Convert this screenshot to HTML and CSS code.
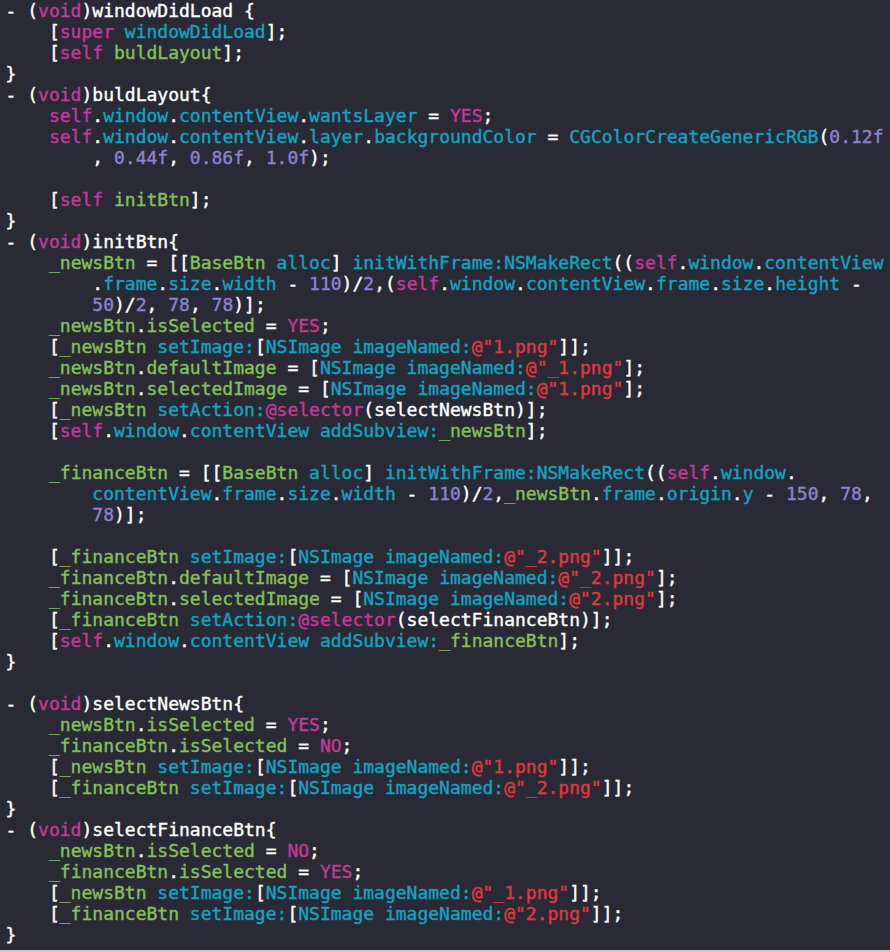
FILE: index.html
```html
<!DOCTYPE html>
<html>
<head>
<meta charset="utf-8">
<link rel="stylesheet" href="styles.css">
</head>
<body>
<div class="editor"><pre class="code">- (<span class="k">void</span>)windowDidLoad {
    [<span class="k">super</span> <span class="c">windowDidLoad</span>];
    [<span class="k">self</span> <span class="g">buldLayout</span>];
}
- (<span class="k">void</span>)buldLayout{
    <span class="k">self</span>.<span class="c">window</span>.<span class="c">contentView</span>.<span class="c">wantsLayer</span> = <span class="k">YES</span>;
    <span class="k">self</span>.<span class="c">window</span>.<span class="c">contentView</span>.<span class="c">layer</span>.<span class="c">backgroundColor</span> = <span class="c">CGColorCreateGenericRGB</span>(<span class="n">0.12f</span>
        , <span class="n">0.44f</span>, <span class="n">0.86f</span>, <span class="n">1.0f</span>);

    [<span class="k">self</span> <span class="g">initBtn</span>];
}
- (<span class="k">void</span>)initBtn{
    <span class="g">_newsBtn</span> = [[<span class="g">BaseBtn</span> <span class="c">alloc</span>] <span class="c">initWithFrame:</span><span class="c">NSMakeRect</span>((<span class="k">self</span>.<span class="c">window</span>.<span class="c">contentView</span>
        .<span class="c">frame</span>.<span class="c">size</span>.<span class="c">width</span> - <span class="n">110</span>)/<span class="n">2</span>,(<span class="k">self</span>.<span class="c">window</span>.<span class="c">contentView</span>.<span class="c">frame</span>.<span class="c">size</span>.<span class="c">height</span> -
        <span class="n">50</span>)/<span class="n">2</span>, <span class="n">78</span>, <span class="n">78</span>)];
    <span class="g">_newsBtn</span>.<span class="g">isSelected</span> = <span class="k">YES</span>;
    [<span class="g">_newsBtn</span> <span class="c">setImage:</span>[<span class="c">NSImage</span> <span class="c">imageNamed:</span><span class="s">@"1.png"</span>]];
    <span class="g">_newsBtn</span>.<span class="g">defaultImage</span> = [<span class="c">NSImage</span> <span class="c">imageNamed:</span><span class="s">@"_1.png"</span>];
    <span class="g">_newsBtn</span>.<span class="g">selectedImage</span> = [<span class="c">NSImage</span> <span class="c">imageNamed:</span><span class="s">@"1.png"</span>];
    [<span class="g">_newsBtn</span> <span class="c">setAction:</span><span class="k">@selector</span>(selectNewsBtn)];
    [<span class="k">self</span>.<span class="c">window</span>.<span class="c">contentView</span> <span class="c">addSubview:</span><span class="g">_newsBtn</span>];

    <span class="g">_financeBtn</span> = [[<span class="g">BaseBtn</span> <span class="c">alloc</span>] <span class="c">initWithFrame:</span><span class="c">NSMakeRect</span>((<span class="k">self</span>.<span class="c">window</span>.
        <span class="c">contentView</span>.<span class="c">frame</span>.<span class="c">size</span>.<span class="c">width</span> - <span class="n">110</span>)/<span class="n">2</span>,<span class="g">_newsBtn</span>.<span class="c">frame</span>.<span class="c">origin</span>.<span class="c">y</span> - <span class="n">150</span>, <span class="n">78</span>,
        <span class="n">78</span>)];

    [<span class="g">_financeBtn</span> <span class="c">setImage:</span>[<span class="c">NSImage</span> <span class="c">imageNamed:</span><span class="s">@"_2.png"</span>]];
    <span class="g">_financeBtn</span>.<span class="g">defaultImage</span> = [<span class="c">NSImage</span> <span class="c">imageNamed:</span><span class="s">@"_2.png"</span>];
    <span class="g">_financeBtn</span>.<span class="g">selectedImage</span> = [<span class="c">NSImage</span> <span class="c">imageNamed:</span><span class="s">@"2.png"</span>];
    [<span class="g">_financeBtn</span> <span class="c">setAction:</span><span class="k">@selector</span>(selectFinanceBtn)];
    [<span class="k">self</span>.<span class="c">window</span>.<span class="c">contentView</span> <span class="c">addSubview:</span><span class="g">_financeBtn</span>];
}

- (<span class="k">void</span>)selectNewsBtn{
    <span class="g">_newsBtn</span>.<span class="g">isSelected</span> = <span class="k">YES</span>;
    <span class="g">_financeBtn</span>.<span class="g">isSelected</span> = <span class="k">NO</span>;
    [<span class="g">_newsBtn</span> <span class="c">setImage:</span>[<span class="c">NSImage</span> <span class="c">imageNamed:</span><span class="s">@"1.png"</span>]];
    [<span class="g">_financeBtn</span> <span class="c">setImage:</span>[<span class="c">NSImage</span> <span class="c">imageNamed:</span><span class="s">@"_2.png"</span>]];
}
- (<span class="k">void</span>)selectFinanceBtn{
    <span class="g">_newsBtn</span>.<span class="g">isSelected</span> = <span class="k">NO</span>;
    <span class="g">_financeBtn</span>.<span class="g">isSelected</span> = <span class="k">YES</span>;
    [<span class="g">_newsBtn</span> <span class="c">setImage:</span>[<span class="c">NSImage</span> <span class="c">imageNamed:</span><span class="s">@"_1.png"</span>]];
    [<span class="g">_financeBtn</span> <span class="c">setImage:</span>[<span class="c">NSImage</span> <span class="c">imageNamed:</span><span class="s">@"2.png"</span>]];
}</pre></div>
</body>
</html>
```

FILE: styles.css
```css
html, body {
  margin: 0;
  padding: 0;
  background: #292a35;
}

.editor {
  box-sizing: border-box;
  width: 890px;
  height: 952px;
  background: #292a35;
  border-bottom: 2px solid #c9c9c9;
  overflow: hidden;
}

.code {
  margin: 0;
  padding: 0 0 0 5.6px;
  font-family: "DejaVu Sans Mono", "Liberation Mono", monospace;
  font-size: 18px;
  line-height: 21px;
  color: #ffffff;
  white-space: pre;
  -webkit-text-stroke: 0.4px currentColor;
}

.k { color: #c4399c; }
.c { color: #15a3c2; }
.g { color: #84c05a; }
.n { color: #8c83d1; }
.s { color: #e0393f; }
```
